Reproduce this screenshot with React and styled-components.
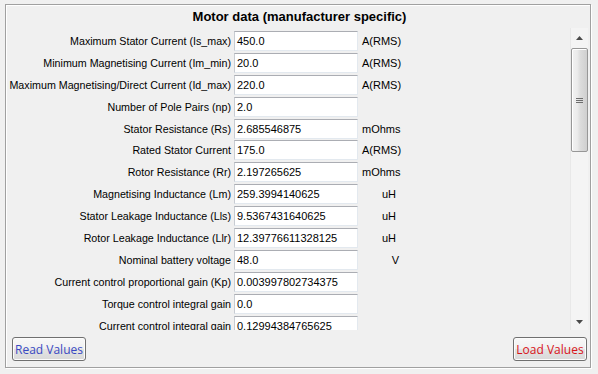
import React from 'react';
import styled, { createGlobalStyle } from 'styled-components';

const GlobalStyle = createGlobalStyle`
  html, body {
    margin: 0;
    padding: 0;
    background: #f0f0f0;
  }
`;

const rows = [
  { label: 'Maximum Stator Current (Is_max)', value: '450.0', unit: 'A(RMS)' },
  { label: 'Minimum Magnetising Current (Im_min)', value: '20.0', unit: 'A(RMS)' },
  { label: 'Maximum Magnetising/Direct Current (Id_max)', value: '220.0', unit: 'A(RMS)' },
  { label: 'Number of Pole Pairs (np)', value: '2.0', unit: '' },
  { label: 'Stator Resistance (Rs)', value: '2.685546875', unit: 'mOhms' },
  { label: 'Rated Stator Current', value: '175.0', unit: 'A(RMS)' },
  { label: 'Rotor Resistance (Rr)', value: '2.197265625', unit: 'mOhms' },
  { label: 'Magnetising Inductance (Lm)', value: '259.3994140625', unit: 'uH\u00a0' },
  { label: 'Stator Leakage Inductance (Lls)', value: '9.5367431640625', unit: 'uH\u00a0' },
  { label: 'Rotor Leakage Inductance (Llr)', value: '12.39776611328125', unit: 'uH\u00a0' },
  { label: 'Nominal battery voltage', value: '48.0', unit: 'V' },
  { label: 'Current control proportional gain (Kp)', value: '0.003997802734375', unit: '' },
  { label: 'Torque control integral gain', value: '0.0', unit: '' },
  { label: 'Current control integral gain', value: '0.12994384765625', unit: '' },
];

const Page = styled.div`
  width: 598px;
  height: 374px;
  box-sizing: border-box;
  padding: 4px 7px 6px 5px;
  font-family: 'Liberation Sans', Arial, sans-serif;
  font-size: 11px;
  color: #000;
`;

const Frame = styled.div`
  height: 100%;
  box-sizing: border-box;
  border: 1px solid #a0a0a0;
  box-shadow: 1px 1px 0 #ffffff, inset 1px 1px 0 #ffffff;
  display: flex;
  flex-direction: column;
`;

const Title = styled.div`
  height: 23px;
  display: flex;
  align-items: center;
  justify-content: center;
  padding-left: 3px;
  font-size: 13px;
  font-weight: bold;
`;

const Body = styled.div`
  height: 302px;
  display: flex;
  flex-direction: row;
`;

const Viewport = styled.div`
  flex: 1;
  overflow: hidden;
  padding-top: 2px;
`;

const Row = styled.div`
  display: grid;
  grid-template-columns: 225px 124px 38px;
  column-gap: 3px;
  height: 21.9px;
  align-items: center;
`;

const Label = styled.div`
  text-align: right;
  white-space: nowrap;
  font-size: 10.7px;
`;

const Field = styled.div`
  height: 20px;
  box-sizing: border-box;
  background: #ffffff;
  border: 1px solid #e3e9ef;
  border-top-color: #abadb3;
  border-left-color: #c8ccd2;
  padding: 0 2px;
  display: flex;
  align-items: center;
  white-space: nowrap;
  overflow: hidden;
`;

const Unit = styled.div`
  margin-left: 1px;
  text-align: right;
  white-space: nowrap;
`;

const ScrollBar = styled.div`
  width: 17px;
  margin-right: 2px;
  display: flex;
  flex-direction: column;
  background: #f4f4f4;
  border-left: 1px solid #e8e8e8;
`;

const ArrowBox = styled.div`
  height: ${(p) => p.$h}px;
  display: flex;
  align-items: center;
  justify-content: center;
`;

const Track = styled.div`
  flex: 1;
  display: flex;
  flex-direction: column;
`;

const Thumb = styled.div`
  height: 104px;
  box-sizing: border-box;
  border: 1px solid #979797;
  border-radius: 2px;
  background: linear-gradient(to right, #f2f2f2 0%, #ebebeb 35%, #dcdcdc 55%, #cfcfcf 100%);
  box-shadow: inset 1px 1px 0 #ffffff;
  display: flex;
  align-items: center;
  justify-content: center;
`;

const Footer = styled.div`
  flex: 1;
  display: flex;
  justify-content: space-between;
  align-items: flex-start;
  padding: 7px 3px 0 6px;
`;

const Button = styled.button`
  height: 24px;
  width: 74px;
  padding: 0;
  box-sizing: border-box;
  border: 1px solid #707070;
  border-radius: 3px;
  background: linear-gradient(#f8f8f8 0%, #f0f0f0 48%, #e3e3e3 52%, #d9d9d9 100%);
  box-shadow: inset 0 0 0 1px #fcfcfc;
  font-family: 'Open Sans', 'Liberation Sans', sans-serif;
  font-size: 12px;
  color: ${(p) => p.$color};
`;

const Arrow = ({ up }) => (
  <svg width="7" height="4" viewBox="0 0 7 4">
    <path d={up ? 'M0 4 L3.5 0 L7 4 Z' : 'M0 0 L7 0 L3.5 4 Z'} fill="#4a4a4a" />
  </svg>
);

const Grip = () => (
  <svg width="7" height="7" viewBox="0 0 7 7">
    <path d="M0 1.5 H7 M0 3.5 H7 M0 5.5 H7" stroke="#6d6d6d" strokeWidth="1" />
  </svg>
);

export default function App() {
  return (
    <Page>
      <GlobalStyle />
      <Frame>
        <Title>Motor data (manufacturer specific)</Title>
        <Body>
          <Viewport>
            {rows.map((r) => (
              <Row key={r.label}>
                <Label>{r.label}</Label>
                <Field>{r.value}</Field>
                <Unit>{r.unit}</Unit>
              </Row>
            ))}
          </Viewport>
          <ScrollBar>
            <ArrowBox $h={20}>
              <Arrow up />
            </ArrowBox>
            <Track>
              <Thumb>
                <Grip />
              </Thumb>
            </Track>
            <ArrowBox $h={17}>
              <Arrow />
            </ArrowBox>
          </ScrollBar>
        </Body>
        <Footer>
          <Button $color="#3a49c2">Read Values</Button>
          <Button $color="#d8141a">Load Values</Button>
        </Footer>
      </Frame>
    </Page>
  );
}
